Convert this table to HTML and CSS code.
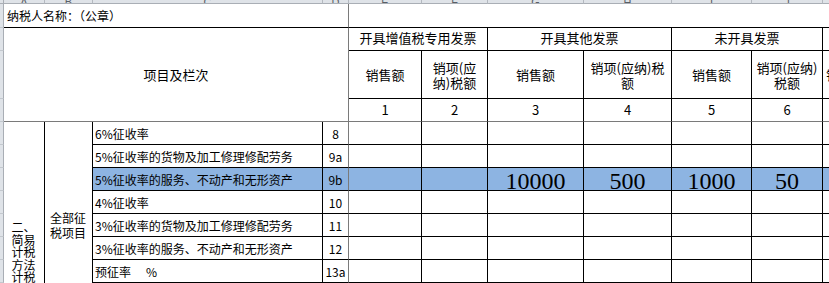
FILE: index.html
```html
<!DOCTYPE html>
<html lang="zh-CN">
<head>
<meta charset="utf-8">
<title>增值税纳税申报表附列资料</title>
<link rel="stylesheet" href="styles.css">
</head>
<body>
<div class="sheet">
  <!-- column header strip -->
  <div class="corner"></div>
  <div class="ch"><span>A</span></div>
  <div class="ch"><span>B</span></div>
  <div class="ch"><span>C</span></div>
  <div class="ch"><span>D</span></div>
  <div class="ch"><span>E</span></div>
  <div class="ch"><span>F</span></div>
  <div class="ch"><span>G</span></div>
  <div class="ch"><span>H</span></div>
  <div class="ch"><span>I</span></div>
  <div class="ch"><span>J</span></div>
  <div class="ch"><span>K</span></div>

  <!-- row: taxpayer name -->
  <div class="rh"></div>
  <div class="name span4">纳税人名称：（公章）</div>
  <div class="name-rest span7"></div>

  <!-- header rows -->
  <div class="rh"></div>
  <div class="item-title span4 rows3">项目及栏次</div>
  <div class="hd span2">开具增值税专用发票</div>
  <div class="hd span2">开具其他发票</div>
  <div class="hd span2">未开具发票</div>
  <div class="hd"></div>

  <div class="rh"></div>
  <div class="hd2">销售额</div>
  <div class="hd2">销项(应<br>纳)税额</div>
  <div class="hd2">销售额</div>
  <div class="hd2">销项(应纳)税<br>额</div>
  <div class="hd2">销售额</div>
  <div class="hd2">销项(应纳)<br>税额</div>
  <div class="hd2 cut">销售额</div>

  <div class="rh"></div>
  <div class="num">1</div>
  <div class="num">2</div>
  <div class="num">3</div>
  <div class="num">4</div>
  <div class="num">5</div>
  <div class="num">6</div>
  <div class="num">7</div>

  <!-- body -->
  <div class="rh"></div>
  <div class="merge-a rows7"><span>二、简易计税方法计税</span></div>
  <div class="merge-b rows7"><span>全部征税项目</span></div>
  <div class="lbl">6%征收率</div>
  <div class="code">8</div>
  <div class="c"></div><div class="c"></div><div class="c"></div><div class="c"></div><div class="c"></div><div class="c"></div><div class="c"></div>

  <div class="rh"></div>
  <div class="lbl">5%征收率的货物及加工修理修配劳务</div>
  <div class="code">9a</div>
  <div class="c"></div><div class="c"></div><div class="c"></div><div class="c"></div><div class="c"></div><div class="c"></div><div class="c"></div>

  <div class="rh"></div>
  <div class="lbl hl">5%征收率的服务、不动产和无形资产</div>
  <div class="code hl">9b</div>
  <div class="c hl"></div>
  <div class="c hl"></div>
  <div class="c hl big">10000</div>
  <div class="c hl big">500</div>
  <div class="c hl big">1000</div>
  <div class="c hl big">50</div>
  <div class="c hl"></div>

  <div class="rh"></div>
  <div class="lbl">4%征收率</div>
  <div class="code">10</div>
  <div class="c"></div><div class="c"></div><div class="c"></div><div class="c"></div><div class="c"></div><div class="c"></div><div class="c"></div>

  <div class="rh"></div>
  <div class="lbl">3%征收率的货物及加工修理修配劳务</div>
  <div class="code">11</div>
  <div class="c"></div><div class="c"></div><div class="c"></div><div class="c"></div><div class="c"></div><div class="c"></div><div class="c"></div>

  <div class="rh"></div>
  <div class="lbl">3%征收率的服务、不动产和无形资产</div>
  <div class="code">12</div>
  <div class="c"></div><div class="c"></div><div class="c"></div><div class="c"></div><div class="c"></div><div class="c"></div><div class="c"></div>

  <div class="rh"></div>
  <div class="lbl">预征率<span class="pct">%</span></div>
  <div class="code">13a</div>
  <div class="c"></div><div class="c"></div><div class="c"></div><div class="c"></div><div class="c"></div><div class="c"></div><div class="c"></div>
</div>
</body>
</html>
```

FILE: styles.css
```css
html, body {
  margin: 0;
  padding: 0;
  background: #ffffff;
  overflow: hidden;
}

.sheet {
  display: grid;
  grid-template-columns: 4px 41px 48px 230px 26px 73px 66px 96px 88px 80px 71px 80px;
  grid-template-rows: 4px 24px 23px 48px 23px repeat(7, 23px);
  width: 829px;
  height: 283px;
  overflow: hidden;
  font-family: "Noto Sans CJK SC", sans-serif;
  color: #000;
}

.sheet > div {
  box-sizing: border-box;
  min-width: 0;
  overflow: hidden;
}

.span2 { grid-column: span 2; }
.span4 { grid-column: span 4; }
.span7 { grid-column: span 7; }
.rows3 { grid-row: span 3; }
.rows7 { grid-row: span 7; }

/* headers of the spreadsheet */
.corner {
  background: #dfe3e8;
  border-right: 1px solid #a9aeb5;
  border-bottom: 1px solid #a9aeb5;
}

.ch {
  background: #dfe3e8;
  border-right: 1px solid #b4b9c0;
  border-bottom: 1px solid #a9aeb5;
  display: flex;
  justify-content: center;
  align-items: flex-end;
}

.ch span {
  font-family: "Liberation Sans", sans-serif;
  font-size: 11px;
  line-height: 11px;
  color: #5a5f66;
  margin-bottom: -5px;
}

.rh {
  background: #dfe3e8;
  border-right: 1px solid #a9aeb5;
  border-bottom: 1px solid #c3c8ce;
}

/* row 1 */
.name {
  font-size: 12px;
  line-height: 23px;
  padding-left: 3px;
  white-space: nowrap;
  border-bottom: 1px solid #000;
  border-right: 1px solid #7a7a7a;
}

.name-rest {
  border-bottom: 1px solid #000;
}

/* header block */
.item-title {
  font-size: 13px;
  display: flex;
  align-items: center;
  justify-content: center;
  border-right: 1px solid #7a7a7a;
  border-bottom: 1px solid #7a7a7a;
}

.hd {
  font-size: 13px;
  line-height: 20px;
  padding-bottom: 2px;
  display: flex;
  align-items: center;
  justify-content: center;
  white-space: nowrap;
  border-right: 1px solid #000;
  border-bottom: 1px solid #000;
}

.hd2 {
  font-size: 13px;
  line-height: 15px;
  display: flex;
  align-items: center;
  justify-content: center;
  text-align: center;
  white-space: nowrap;
  border-right: 1px solid #000;
  border-bottom: 1px solid #000;
}

.hd2.cut {
  justify-content: flex-start;
  padding-left: 3px;
}

.num {
  font-size: 13px;
  line-height: 22px;
  text-align: center;
  border-right: 1px solid #000;
  border-bottom: 1px solid #7a7a7a;
}

/* body */
.merge-a,
.merge-b {
  font-size: 12px;
  display: flex;
  justify-content: center;
  align-items: flex-start;
  border-right: 1px solid #000;
}

.merge-a {
  padding-top: 99px;
  line-height: 12.5px;
}

.merge-a span {
  width: 25px;
}

.merge-b {
  padding-top: 88px;
  line-height: 15px;
}

.merge-b span {
  width: 37px;
}

.lbl {
  font-size: 12px;
  line-height: 22px;
  padding-left: 2px;
  padding-top: 1px;
  white-space: nowrap;
  border-right: 1px solid #000;
  border-bottom: 1px solid #000;
}

.pct {
  margin-left: 15px;
}

.code {
  font-size: 12px;
  line-height: 22px;
  padding-top: 1px;
  text-align: center;
  border-right: 1px solid #7a7a7a;
  border-bottom: 1px solid #000;
}

.c {
  border-right: 1px solid #000;
  border-bottom: 1px solid #000;
}

.hl {
  background: #8db4e2;
}

.big {
  font-family: "Liberation Serif", serif;
  font-size: 24px;
  line-height: 22px;
  padding-top: 2px;
  text-align: center;
  white-space: nowrap;
}
```
